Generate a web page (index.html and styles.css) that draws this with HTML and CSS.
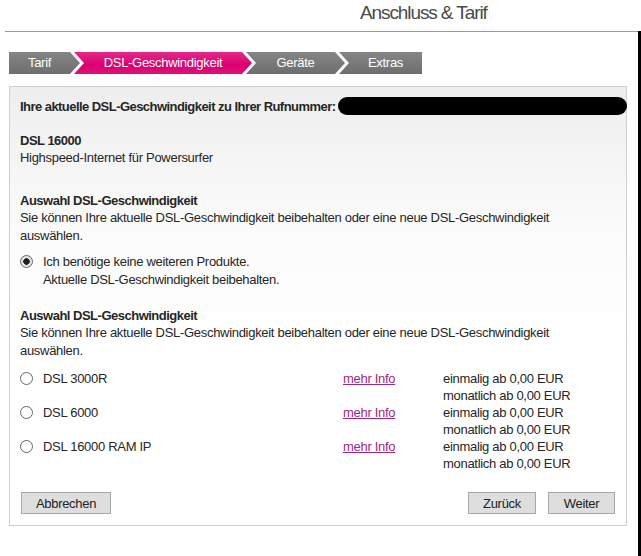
FILE: index.html
```html
<!DOCTYPE html>
<html lang="de">
  <head>
    <meta charset="utf-8" />
    <title>Anschluss &amp; Tarif</title>
    <link rel="stylesheet" href="styles.css">
  </head>

  <body>
    <div class="page-head">
      <h1 class="page-title">Anschluss &amp; Tarif</h1>
    </div>

    <div class="frame">
      <div class="rule"></div>

      <!-- wizard steps -->
      <ol class="steps">
        <li class="step step-first">Tarif</li>
        <li class="step step-active">DSL-Geschwindigkeit</li>
        <li class="step">Geräte</li>
        <li class="step step-last">Extras</li>
      </ol>

      <div class="panel">
        <div class="current-line">
          <span class="current-label">Ihre aktuelle DSL-Geschwindigkeit zu Ihrer Rufnummer:</span>
          <span class="masked"></span>
        </div>

        <div class="current-tarif">
          <div class="strong">DSL 16000</div>
          <div>Highspeed-Internet für Powersurfer</div>
        </div>

        <div class="section">
          <div class="strong">Auswahl DSL-Geschwindigkeit</div>
          <p class="section-text">Sie können Ihre aktuelle DSL-Geschwindigkeit beibehalten oder eine neue DSL-Geschwindigkeit auswählen.</p>
          <div class="keep-option">
            <span class="radio radio-checked"></span>
            <div class="keep-text">
              <div>Ich benötige keine weiteren Produkte.</div>
              <div>Aktuelle DSL-Geschwindigkeit beibehalten.</div>
            </div>
          </div>
        </div>

        <div class="section section-second">
          <div class="strong">Auswahl DSL-Geschwindigkeit</div>
          <p class="section-text">Sie können Ihre aktuelle DSL-Geschwindigkeit beibehalten oder eine neue DSL-Geschwindigkeit auswählen.</p>
          <div class="options">
            <span class="radio"></span>
            <span class="opt-name">DSL 3000R</span>
            <a class="opt-info" href="#">mehr Info</a>
            <span class="opt-price">einmalig ab 0,00 EUR<br>monatlich ab 0,00 EUR</span>

            <span class="radio"></span>
            <span class="opt-name">DSL 6000</span>
            <a class="opt-info" href="#">mehr Info</a>
            <span class="opt-price">einmalig ab 0,00 EUR<br>monatlich ab 0,00 EUR</span>

            <span class="radio"></span>
            <span class="opt-name">DSL 16000 RAM IP</span>
            <a class="opt-info" href="#">mehr Info</a>
            <span class="opt-price">einmalig ab 0,00 EUR<br>monatlich ab 0,00 EUR</span>
          </div>
        </div>

        <div class="actions">
          <button class="btn btn-cancel">Abbrechen</button>
          <div class="actions-right">
            <button class="btn btn-back">Zurück</button>
            <button class="btn btn-next">Weiter</button>
          </div>
        </div>
      </div>
    </div>
  </body>
</html>
```

FILE: styles.css
```css
html, body {
  margin: 0;
  padding: 0;
}

body {
  width: 641px;
  height: 556px;
  overflow: hidden;
  background: #fff;
  color: #262626;
  font-family: "Liberation Sans", Arial, sans-serif;
  font-size: 13px;
}

.page-head {
  height: 23px;
  padding-left: 360px;
}

.page-title {
  margin: 0;
  padding-top: 3px;
  font-size: 19px;
  font-weight: normal;
  line-height: 20px;
  letter-spacing: -1.1px;
  color: #4a4a4a;
}

/* window frame edge */
.frame {
  height: 533px;
  box-sizing: border-box;
  border-right: 3px solid #000;
  border-bottom: 2px solid #000;
}

.rule {
  margin: 8px 0 0 5px;
  border-top: 1px solid #9a9a9a;
}

/* wizard steps */
.steps {
  display: flex;
  margin: 20px 0 0 9px;
  padding: 0;
  list-style: none;
}

.step {
  height: 22px;
  line-height: 22px;
  margin-left: -6px;
  padding: 0 10px 0 10px;
  box-sizing: border-box;
  text-align: center;
  color: #fff;
  font-size: 13px;
  letter-spacing: -0.3px;
  background: linear-gradient(#858585, #6e6e6e);
  clip-path: polygon(0 0, calc(100% - 10px) 0, 100% 50%, calc(100% - 10px) 100%, 0 100%, 10px 50%);
  width: 99px;
}

.step-first {
  margin-left: 0;
  padding-left: 0;
  width: 71px;
  clip-path: polygon(0 0, calc(100% - 10px) 0, 100% 50%, calc(100% - 10px) 100%, 0 100%);
}

.step-active {
  width: 178px;
  background: linear-gradient(#e52a8a, #d9006f 60%, #e0107a);
}

.step-last {
  width: 83px;
  padding-right: 0;
  clip-path: polygon(0 0, 100% 0, 100% 100%, 0 100%, 10px 50%);
}

/* main box */
.panel {
  margin: 12px 0 0 9px;
  width: 596px;
  padding: 10px 10px 11px;
  border: 1px solid #cfcfcf;
  background: linear-gradient(#eeeeee, #fbfbfb 140px, #fff 260px);
  line-height: 17px;
  letter-spacing: -0.3px;
}

.strong {
  font-weight: bold;
  letter-spacing: -0.5px;
}

.current-line {
  display: flex;
  align-items: center;
  height: 18px;
}

.current-label {
  font-weight: bold;
  letter-spacing: -0.55px;
  white-space: nowrap;
}

.masked {
  flex: 1;
  height: 18px;
  margin: 0 -11px 0 3px;
  border-radius: 9px;
  background: #000;
}

.current-tarif {
  margin-top: 17px;
}

.section {
  margin-top: 26px;
}

.section-second {
  margin-top: 18px;
}

.section-text {
  margin: 0;
  line-height: 18px;
  width: 560px;
}

.keep-option {
  display: flex;
  margin-top: 8px;
  line-height: 18px;
}

.keep-text {
  margin-left: 10px;
}

.radio {
  display: inline-block;
  width: 11px;
  height: 11px;
  margin-top: 2px;
  border: 1px solid #666;
  border-radius: 50%;
  background: #fff;
  box-sizing: content-box;
}

.radio-checked {
  background: radial-gradient(circle, #222 0 3px, #e6e6e6 3.5px);
}

/* speed options: radio | name | link | prices */
.options {
  display: grid;
  grid-template-columns: 23px 300px 100px auto;
  margin-top: 10px;
  line-height: 17px;
}

.options .radio {
  margin-top: 2px;
}

.opt-info {
  color: #9b2a82;
  text-decoration: underline;
}

.actions {
  display: flex;
  justify-content: space-between;
  margin-top: 20px;
  padding: 0 1px;
}

.actions-right {
  display: flex;
  gap: 12px;
}

.btn {
  height: 22px;
  padding: 0;
  border: 1px solid #a8a8a8;
  background: #dedede;
  color: #222;
  font-family: "Liberation Sans", Arial, sans-serif;
  font-size: 13px;
  letter-spacing: -0.3px;
}

.btn-cancel {
  width: 90px;
}

.btn-back {
  width: 68px;
}

.btn-next {
  width: 67px;
}
```
